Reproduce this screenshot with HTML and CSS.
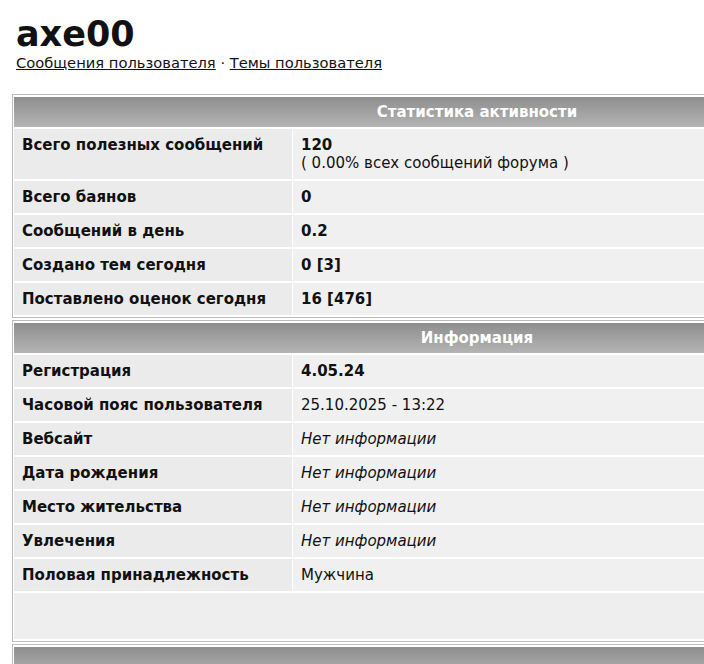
FILE: index.html
```html
<!DOCTYPE html>
<html lang="ru">
<head>
    <meta charset="UTF-8">
    <title>axe00 — профиль</title>
    <link rel="stylesheet" href="styles.css">
</head>
<body>

    <div class="profile-head">
        <h1>axe00</h1>
        <p class="profile-links">
            <a href="#">Сообщения пользователя</a> · <a href="#">Темы пользователя</a>
        </p>
    </div>

    <table class="block">
        <tr><th colspan="2">Статистика активности</th></tr>
        <tr>
            <td class="label top">Всего полезных сообщений</td>
            <td class="value"><b>120</b><br>( 0.00% всех сообщений форума )</td>
        </tr>
        <tr><td class="label">Всего баянов</td><td class="value"><b>0</b></td></tr>
        <tr><td class="label">Сообщений в день</td><td class="value"><b>0.2</b></td></tr>
        <tr><td class="label">Создано тем сегодня</td><td class="value"><b>0 [3]</b></td></tr>
        <tr><td class="label">Поставлено оценок сегодня</td><td class="value"><b>16 [476]</b></td></tr>
    </table>

    <table class="block">
        <tr><th colspan="2">Информация</th></tr>
        <tr><td class="label">Регистрация</td><td class="value"><b>4.05.24</b></td></tr>
        <tr><td class="label">Часовой пояс пользователя</td><td class="value">25.10.2025 - 13:22</td></tr>
        <tr><td class="label">Вебсайт</td><td class="value"><i>Нет информации</i></td></tr>
        <tr><td class="label">Дата рождения</td><td class="value"><i>Нет информации</i></td></tr>
        <tr><td class="label">Место жительства</td><td class="value"><i>Нет информации</i></td></tr>
        <tr><td class="label">Увлечения</td><td class="value"><i>Нет информации</i></td></tr>
        <tr><td class="label">Половая принадлежность</td><td class="value">Мужчина</td></tr>
        <tr><td class="filler" colspan="2"></td></tr>
    </table>

    <table class="block">
        <tr><th colspan="2">&nbsp;</th></tr>
        <tr><td class="filler" colspan="2"></td></tr>
    </table>

</body>
</html>
```

FILE: styles.css
```css
body {
    margin: 0;
    padding: 0 12px;
    font-family: "DejaVu Sans", Verdana, sans-serif;
    font-size: 15px;
    color: #111;
    background: #fff;
}

.profile-head {
    padding: 14px 4px 0 4px;
    margin-bottom: 22px;
}

h1 {
    margin: 0;
    font-size: 35px;
    line-height: 40px;
}

.profile-links {
    margin: 0;
    font-size: 14.7px;
    line-height: 18px;
}

.profile-links a {
    color: #111;
}

.block {
    width: 930px;
    border: 1px solid #bbb;
    border-collapse: separate;
    border-spacing: 1px 2px;
    margin-bottom: 2px;
    background: #fff;
}

.block th {
    height: 30px;
    padding: 0;
    background: linear-gradient(#8e8e8e, #b4b4b4);
    color: #fff;
    font-size: 15px;
    font-weight: bold;
}

.block td {
    height: 18px;
    padding: 7px 8px;
    line-height: 18px;
}

.label {
    width: 262px;
    background: #ebebeb;
    font-weight: bold;
}

.label.top {
    vertical-align: top;
}

.value {
    background: #f0f0f0;
}

.block td.filler {
    height: 32px;
    background: #eee;
}
```
